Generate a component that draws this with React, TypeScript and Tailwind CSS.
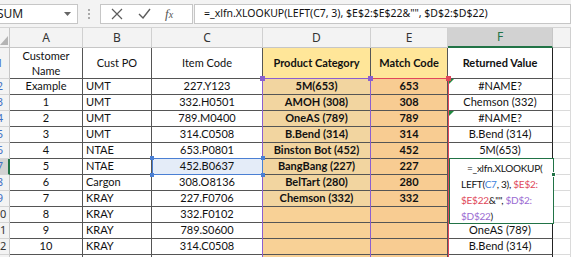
import React from "react";

type Row = { a: string; b: string; c: string; d: string; e: string; f: string; err?: boolean };

const rows: Row[] = [
  { a: "Example", b: "UMT", c: "227.Y123", d: "5M(653)", e: "653", f: "#NAME?", err: true },
  { a: "1", b: "UMT", c: "332.H0501", d: "AMOH (308)", e: "308", f: "Chemson (332)" },
  { a: "2", b: "UMT", c: "789.M0400", d: "OneAS (789)", e: "789", f: "#NAME?", err: true },
  { a: "3", b: "UMT", c: "314.C0508", d: "B.Bend (314)", e: "314", f: "B.Bend (314)" },
  { a: "4", b: "NTAE", c: "653.P0801", d: "Binston Bot (452)", e: "452", f: "5M(653)" },
  { a: "5", b: "NTAE", c: "452.B0637", d: "BangBang (227)", e: "227", f: "" },
  { a: "6", b: "Cargon", c: "308.O8136", d: "BelTart (280)", e: "280", f: "" },
  { a: "7", b: "KRAY", c: "227.F0706", d: "Chemson (332)", e: "332", f: "" },
  { a: "8", b: "KRAY", c: "332.F0102", d: "", e: "", f: "" },
  { a: "9", b: "KRAY", c: "789.S0600", d: "", e: "", f: "OneAS (789)" },
  { a: "10", b: "KRAY", c: "314.C0508", d: "", e: "", f: "B.Bend (314)" },
  { a: "", b: "", c: "", d: "", e: "", f: "" },
];

const cols = ["A", "B", "C", "D", "E", "F", ""];

function RowHeader({ n, selected }: { n: number; selected?: boolean }) {
  return (
    <div
      className={
        "overflow-hidden border-b border-[#d4d4d4] " +
        (selected ? "bg-[#d2d2d2] border-r-2 border-r-[#217346]" : "bg-[#f3f3f3] border-r border-r-[#c6c6c6]")
      }
    >
      <div
        className={
          "w-[26px] -ml-[13px] h-full flex items-center justify-center text-[11px] font-['Noto_Sans',sans-serif] " +
          (n >= 10 ? "text-[#333]" : "text-[#3f6fc4]")
        }
      >
        {n}
      </div>
    </div>
  );
}

export default function App() {
  const cell = "border-r border-b border-[#555] flex items-center text-[11px] text-[#111] overflow-hidden whitespace-nowrap";
  return (
    <div className="relative w-[571px] h-[257px] overflow-hidden bg-white font-['Lato',sans-serif]">
      {/* formula bar */}
      <div className="h-[28px] bg-[#f3f3f3] flex items-center border-b border-[#d4d4d4]">
        <div className="-ml-[5px] w-[83px] h-[20px] bg-white border border-[#c6c6c6] flex items-center justify-between pr-[6px] font-['Noto_Sans',sans-serif] text-[12px] text-[#222]">
          <span className="pl-[1px]">SUM</span>
          <svg width="7" height="4" viewBox="0 0 7 4">
            <path d="M0 0 L7 0 L3.5 4 Z" fill="#666" />
          </svg>
        </div>
        <div className="w-[22px] flex flex-col items-center gap-[2px]">
          <span className="w-[2px] h-[2px] bg-[#aaa]" />
          <span className="w-[2px] h-[2px] bg-[#aaa]" />
          <span className="w-[2px] h-[2px] bg-[#aaa]" />
        </div>
        <div className="w-[93px] h-[20px] bg-white border border-[#c6c6c6] flex items-center">
          <svg width="12" height="12" viewBox="0 0 12 12" className="ml-[10px]">
            <path d="M1 1 L11 11 M11 1 L1 11" stroke="#5c5c5c" strokeWidth="1.2" />
          </svg>
          <svg width="13" height="11" viewBox="0 0 13 11" className="ml-[15px]">
            <path d="M1 6 L5 10 L12 1" stroke="#5c5c5c" strokeWidth="1.4" fill="none" />
          </svg>
          <span className="ml-[14px] font-['Liberation_Serif',serif] italic text-[13px] text-[#555] leading-none">
            f<span className="text-[10px]">x</span>
          </span>
        </div>
        <div className="ml-[1px] flex-1 h-[20px] bg-white border border-[#c6c6c6] flex items-center pl-[9px] font-['Noto_Sans',sans-serif] text-[10.5px] text-[#111] whitespace-nowrap overflow-hidden">
          =_xlfn.XLOOKUP(LEFT(C7, 3), $E$2:$E$22&amp;"", $D$2:$D$22)
        </div>
      </div>

      {/* grid */}
      <div className="grid grid-cols-[10px_73px_69px_111px_108px_77px_105px_18px] grid-rows-[20px_31px_repeat(12,16px)]">
        {/* column headers */}
        <div className="bg-[#f3f3f3] border-r border-b border-[#c6c6c6] relative">
          <svg width="10" height="20" viewBox="0 0 10 20" className="absolute left-0 top-0">
            <path d="M0 17 L8 17 L8 8 Z" fill="#b4b4b4" />
          </svg>
        </div>
        {cols.map((c, i) =>
          c === "F" ? (
            <div
              key={i}
              className="bg-[#d2d2d2] border-r border-[#c6c6c6] border-b-2 border-b-[#217346] flex items-center justify-center text-[12px] text-[#217346] font-['Noto_Sans',sans-serif]"
            >
              {c}
            </div>
          ) : (
            <div
              key={i}
              className="bg-[#f3f3f3] border-r border-b border-[#d0d0d0] border-b-[#c6c6c6] flex items-center justify-center text-[12px] text-[#333] font-['Noto_Sans',sans-serif]"
            >
              {c}
            </div>
          )
        )}

        {/* row 1 */}
        <RowHeader n={1} />
        <div className={cell + " justify-center flex-col leading-[15px]"}>
          <span>Customer</span>
          <span>Name</span>
        </div>
        <div className={cell + " justify-center"}>Cust PO</div>
        <div className={cell + " justify-center"}>Item Code</div>
        <div className={cell + " justify-center bg-[#ffe699] font-bold"}>Product Category</div>
        <div className={cell + " justify-center bg-[#ffe699] font-bold"}>Match Code</div>
        <div className={cell + " justify-center font-bold border-r-[#222]"}>Returned Value</div>
        <div className="border-r border-b border-[#dadada]" />

        {rows.map((r, i) => {
          const n = i + 2;
          const dBg = i < 8 ? "bg-[#f2d5a0]" : "bg-[#f8d196]";
          return (
            <React.Fragment key={n}>
              <RowHeader n={n} selected={n === 7} />
              <div className={cell + " justify-center"}>{r.a}</div>
              <div className={cell + " pl-[3px]"}>{r.b}</div>
              <div className={cell + " justify-center " + (n === 7 ? "bg-[#e4ecf8]" : "")}>{r.c}</div>
              <div className={cell + " justify-center font-bold " + dBg}>{r.d}</div>
              <div className={cell + " justify-center font-bold bg-[#f8cc92]"}>{r.e}</div>
              <div className={cell + " justify-center relative border-r-[#222]"}>
                {r.err && (
                  <svg width="5" height="5" viewBox="0 0 5 5" className="absolute left-[1px] top-0">
                    <path d="M0 0 L5 0 L0 5 Z" fill="#1f8a3f" />
                  </svg>
                )}
                {r.f}
              </div>
              <div className="border-r border-b border-[#dadada]" />
            </React.Fragment>
          );
        })}
      </div>

      {/* reference highlight: E2:E22 (red) */}
      <div className="absolute left-[370px] top-[78px] w-[79px] h-[200px] border border-[#e0475a]" />
      {/* reference highlight: D2:D22 (purple) */}
      <div className="absolute left-[262px] top-[78px] w-[109px] h-[200px] border border-[#8b5fcf]" />
      <div className="absolute left-[260px] top-[76px] w-[5px] h-[5px] bg-[#8b5fcf]" />
      <div className="absolute left-[368px] top-[76px] w-[5px] h-[5px] bg-[#8b5fcf]" />
      <div className="absolute left-[446px] top-[76px] w-[5px] h-[5px] bg-[#e0475a]" />

      {/* C7 reference highlight */}
      <div className="absolute left-[152px] top-[158px] w-[111px] h-[17px] border border-[#4a7fd3]" />
      <div className="absolute left-[150px] top-[156px] w-[4px] h-[4px] bg-[#4a7fd3]" />
      <div className="absolute left-[261px] top-[156px] w-[4px] h-[4px] bg-[#4a7fd3]" />
      <div className="absolute left-[150px] top-[173px] w-[4px] h-[4px] bg-[#4a7fd3]" />
      <div className="absolute left-[261px] top-[173px] w-[4px] h-[4px] bg-[#4a7fd3]" />

      {/* F7 in-cell edit box */}
      <div className="absolute left-[449px] top-[158px] w-[105px] h-[66px] bg-white border border-[#217346] pt-[1px] pl-[11px] text-[10px] tracking-[-0.25px] leading-[16px] text-[#111] whitespace-nowrap">
        <div className="pl-[6px]">=_xlfn.XLOOKUP(</div>
        <div>
          LEFT(<span className="text-[#3d7fdc]">C7</span>, 3), <span className="text-[#e0475a]">$E$2:</span>
        </div>
        <div>
          <span className="text-[#e0475a]">$E$22</span>&amp;"", <span className="text-[#9a6ad2]">$D$2:</span>
        </div>
        <div>
          <span className="text-[#9a6ad2]">$D$22</span>)
        </div>
      </div>
      <div className="absolute left-[551px] top-[172px] w-[5px] h-[5px] bg-[#217346] border border-white" />
    </div>
  );
}
